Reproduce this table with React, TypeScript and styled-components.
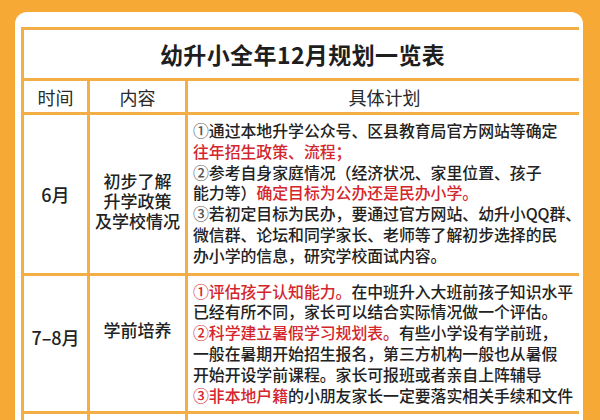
import React from "react";
import styled, { createGlobalStyle } from "styled-components";

const Global = createGlobalStyle`
  html, body { margin: 0; padding: 0; }
  body {
    background: #f7a935;
    width: 600px;
    height: 420px;
    overflow: hidden;
    font-family: "Noto Sans CJK SC", "Noto Sans", sans-serif;
    color: #222;
  }
`;

const Card = styled.div`
  margin: 12px 0 0 15px;
  width: 568px;
  box-sizing: border-box;
  background: #fff;
  border-radius: 12px 12px 0 0;
  padding: 15px 4px 0 6px;
`;

const Table = styled.div`
  display: grid;
  grid-template-columns: 63px 95px 1fr;
  gap: 3px;
  padding: 3px;
  background: #f4ae46;
`;

const Title = styled.div`
  grid-column: 1 / 4;
  height: 48px;
  background: #fff;
  display: flex;
  align-items: center;
  justify-content: center;
  font-size: 23px;
  font-weight: 700;
  color: #1e1e1e;
  letter-spacing: 0.4px;
`;

const Head = styled.div`
  height: 31px;
  background: #fff;
  display: flex;
  align-items: center;
  justify-content: center;
  font-size: 18px;
  color: #2a2a2a;
`;

const Cell = styled.div<{ $shift?: number; $size?: number }>`
  background: #fff;
  display: flex;
  align-items: center;
  justify-content: center;
  text-align: center;
  font-size: ${(p) => p.$size ?? 17}px;
  font-weight: 500;
  line-height: 20px;
  color: #222;
  padding-top: ${(p) => (p.$shift && p.$shift > 0 ? p.$shift : 0)}px;
  padding-bottom: ${(p) => (p.$shift && p.$shift < 0 ? -p.$shift : 0)}px;
`;

const Plan = styled.div<{ $pt: number; $pb: number }>`
  background: #fff;
  padding: ${(p) => p.$pt}px 0 ${(p) => p.$pb}px 5px;
  font-size: 15.9px;
  font-weight: 500;
  letter-spacing: -0.05px;
  line-height: 20.8px;
  white-space: nowrap;
  color: #222;
`;

const Hl = styled.span`
  color: #d4262c;
`;

const Num = styled.span`
  color: #555;
`;

const Empty = styled.div`
  background: #fff;
  height: 60px;
`;

export default function App() {
  return (
    <>
      <Global />
      <Card>
        <Table>
          <Title>幼升小全年12月规划一览表</Title>
          <Head>时间</Head>
          <Head>内容</Head>
          <Head>具体计划</Head>

          <Cell $size={18}>6月</Cell>
          <Cell $shift={14}>
            初步了解
            <br />
            升学政策
            <br />
            及学校情况
          </Cell>
          <Plan $pt={6} $pb={6}>
            <Num>①</Num>通过本地升学公众号、区县教育局官方网站等确定
            <br />
            <Hl>往年招生政策、流程；</Hl>
            <br />
            <Num>②</Num>参考自身家庭情况（经济状况、家里位置、孩子
            <br />
            能力等）<Hl>确定目标为公办还是民办小学。</Hl>
            <br />
            <Num>③</Num>若初定目标为民办，要通过官方网站、幼升小QQ群、
            <br />
            微信群、论坛和同学家长、老师等了解初步选择的民
            <br />
            办小学的信息，研究学校面试内容。
          </Plan>

          <Cell $size={18} $shift={-13}>
            7–8月
          </Cell>
          <Cell $shift={-27}>学前培养</Cell>
          <Plan $pt={6} $pb={5}>
            <Hl>①评估孩子认知能力。</Hl>在中班升入大班前孩子知识水平
            <br />
            已经有所不同，家长可以结合实际情况做一个评估。
            <br />
            <Hl>②科学建立暑假学习规划表。</Hl>有些小学设有学前班，
            <br />
            一般在暑期开始招生报名，第三方机构一般也从暑假
            <br />
            开始开设学前课程。家长可报班或者亲自上阵辅导
            <br />
            <Hl>③非本地户籍</Hl>的小朋友家长一定要落实相关手续和文件
          </Plan>

          <Empty />
          <Empty />
          <Empty />
        </Table>
      </Card>
    </>
  );
}
